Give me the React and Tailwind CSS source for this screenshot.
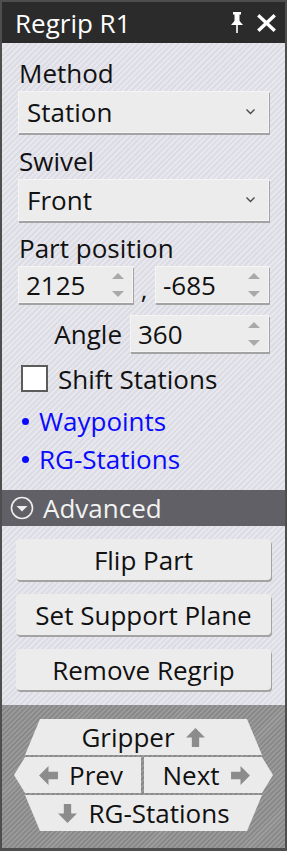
import React from 'react';

const PinIcon = () => (
  <svg width="14" height="21" viewBox="0 0 14 21" fill="#ffffff">
    <rect x="3" y="0" width="8" height="2.5" />
    <rect x="4.5" y="2" width="5" height="8" />
    <polygon points="4.5,9 9.5,9 13,13 1,13" />
    <rect x="6.2" y="12" width="1.6" height="9" />
  </svg>
);

const CloseIcon = () => (
  <svg width="19" height="18" viewBox="0 0 19 18" stroke="#ffffff" strokeWidth="3.4" strokeLinecap="square">
    <line x1="2.5" y1="2.5" x2="16.5" y2="15.5" />
    <line x1="16.5" y1="2.5" x2="2.5" y2="15.5" />
  </svg>
);

const Chevron = () => (
  <svg width="11" height="8" viewBox="0 0 11 8" fill="none" stroke="#4a4a4a" strokeWidth="1.4">
    <polyline points="1.5,1.5 5.5,5.5 9.5,1.5" />
  </svg>
);

const SpinArrows = () => (
  <div className="flex flex-col items-center justify-between h-[24px] w-[12px]">
    <svg width="12" height="6" viewBox="0 0 12 6" fill="#a9a9a9">
      <polygon points="6,0 12,6 0,6" />
    </svg>
    <svg width="12" height="6" viewBox="0 0 12 6" fill="#a9a9a9">
      <polygon points="0,0 12,0 6,6" />
    </svg>
  </div>
);

const Arrow = ({ dir }) => {
  const rot = { up: 'rotate-0', down: 'rotate-180', left: '-rotate-90', right: 'rotate-90' }[dir];
  return (
    <svg width="21" height="21" viewBox="0 0 20 20" fill="#8c8c8c" className={rot}>
      <polygon points="10,1 19,10 13.5,10 13.5,19 6.5,19 6.5,10 1,10" />
    </svg>
  );
};

const Dropdown = ({ value }) => (
  <div className="mt-[2px] h-[42px] flex items-center justify-between bg-[#ececec] border border-[#f4f4f4] shadow-[1px_2px_0_#a3a3a3] pl-[8px] pr-[12px]">
    <span className="text-[26px] text-[#111]">{value}</span>
    <Chevron />
  </div>
);

const SpinBox = ({ value, className }) => (
  <div className={`h-[37px] flex items-center justify-between bg-[#ececec] border border-[#f4f4f4] shadow-[1px_2px_0_#a3a3a3] pl-[7px] pr-[8px] ${className}`}>
    <span className="text-[26px] text-[#111]">{value}</span>
    <SpinArrows />
  </div>
);

const ActionButton = ({ label }) => (
  <div className="h-[41px] flex items-center justify-center rounded-[4px] bg-[#ececec] shadow-[1px_2px_0_#a3a3a3] text-[26px] text-[#111]">
    {label}
  </div>
);

export default function App() {
  return (
    <div className="w-[287px] h-[851px] bg-[#4e4e4e] px-[2px] pt-[2px] pb-[3px] flex flex-col font-['Open_Sans',sans-serif] leading-[32px]">
      {/* Title bar */}
      <div className="h-[41px] shrink-0 bg-[#2b2b2b] flex items-center justify-between pl-[13px] pr-[9px]">
        <span className="text-[26px] text-white">Regrip R1</span>
        <div className="flex items-center gap-[13px]">
          <PinIcon />
          <CloseIcon />
        </div>
      </div>

      {/* Body */}
      <div className="flex-1 flex flex-col bg-[repeating-linear-gradient(135deg,#dcdce4_0px,#dcdce4_2px,#e7e7ed_2px,#e7e7ed_4px)]">
        <div className="px-[16px] pt-[14px] flex flex-col">
          <div className="text-[26px] text-[#111] h-[32px] pl-[1px]">Method</div>
          <Dropdown value="Station" />

          <div className="mt-[12px] text-[26px] text-[#111] h-[32px] pl-[1px]">Swivel</div>
          <Dropdown value="Front" />

          <div className="mt-[11px] text-[26px] text-[#111] h-[32px] pl-[1px]">Part position</div>
          <div className="mt-[2px] flex items-end">
            <SpinBox value="2125" className="w-[115px]" />
            <span className="w-[22px] text-center text-[26px] text-[#111] leading-[28px]">,</span>
            <SpinBox value="-685" className="flex-1" />
          </div>

          <div className="mt-[12px] flex items-center">
            <span className="w-[112px] pr-[8px] text-right text-[26px] text-[#111]">Angle</span>
            <SpinBox value="360" className="flex-1" />
          </div>

          <label className="mt-[13px] flex items-center h-[27px] pl-[3px]">
            <span className="w-[27px] h-[27px] bg-white border-2 border-[#5c5c5c] shrink-0"></span>
            <span className="ml-[10px] text-[26px] text-[#111]">Shift Stations</span>
          </label>

          <div className="mt-[13px] flex items-center h-[32px] pl-[4px] text-[26px] text-[#0a0aff]">
            <span className="w-[7px] h-[7px] rounded-full bg-[#0a0aff] mr-[10px]"></span>
            Waypoints
          </div>
          <div className="mt-[6px] flex items-center h-[32px] pl-[4px] text-[26px] text-[#0a0aff]">
            <span className="w-[7px] h-[7px] rounded-full bg-[#0a0aff] mr-[10px]"></span>
            RG-Stations
          </div>
        </div>

        {/* Advanced header */}
        <div className="mt-[15px] h-[36px] bg-[#606066] flex items-center pl-[8px]">
          <svg width="24" height="24" viewBox="0 0 24 24" fill="none">
            <circle cx="12" cy="12" r="10.5" stroke="#eeeeee" strokeWidth="1.6" />
            <polygon points="6.5,10 17.5,10 12,15.5" fill="#eeeeee" />
          </svg>
          <span className="ml-[9px] text-[26px] text-[#f2f2f2]">Advanced</span>
        </div>

        <div className="px-[14px] pt-[13px] flex flex-col gap-[14px]">
          <ActionButton label="Flip Part" />
          <ActionButton label="Set Support Plane" />
          <ActionButton label="Remove Regrip" />
        </div>

        {/* Navigation pad */}
        <div className="mt-[15px] flex-1 flex flex-col items-center pt-[14px] bg-[repeating-linear-gradient(135deg,#8a8a8a_0px,#8a8a8a_2px,#9c9c9c_2px,#9c9c9c_3.5px)]">
          <div className="w-[237px] h-[36px] bg-[#ebebeb] [clip-path:polygon(15px_0,calc(100%_-_15px)_0,100%_100%,0_100%)] flex items-center justify-center gap-[10px] text-[26px] text-[#111]">
            <span>Gripper</span>
            <Arrow dir="up" />
          </div>
          <div className="mt-[2px] w-[259px] h-[36px] flex gap-[3px]">
            <div className="w-[127px] h-full bg-[#ebebeb] [clip-path:polygon(11px_0,100%_0,100%_100%,11px_100%,0_50%)] flex items-center justify-center gap-[10px] pl-[6px] text-[26px] text-[#111]">
              <Arrow dir="left" />
              <span>Prev</span>
            </div>
            <div className="flex-1 h-full bg-[#ebebeb] [clip-path:polygon(0_0,calc(100%_-_11px)_0,100%_50%,calc(100%_-_11px)_100%,0_100%)] flex items-center justify-center gap-[10px] pr-[4px] text-[26px] text-[#111]">
              <span>Next</span>
              <Arrow dir="right" />
            </div>
          </div>
          <div className="mt-[2px] w-[237px] h-[36px] bg-[#ebebeb] [clip-path:polygon(0_0,100%_0,calc(100%_-_15px)_100%,15px_100%)] flex items-center justify-center gap-[10px] text-[26px] text-[#111]">
            <Arrow dir="down" />
            <span>RG-Stations</span>
          </div>
        </div>
      </div>
    </div>
  );
}
